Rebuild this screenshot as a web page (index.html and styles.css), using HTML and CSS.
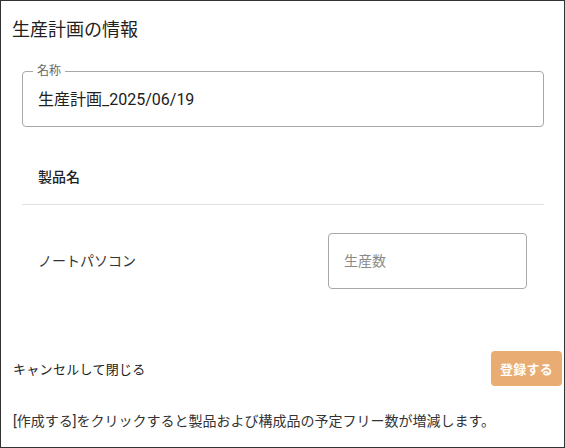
FILE: index.html
```html
<!DOCTYPE html>
<html lang="ja">
<head>
    <meta charset="UTF-8">
    <meta name="viewport" content="width=device-width, initial-scale=1.0">
    <title>生産計画の情報</title>
    <link rel="stylesheet" href="styles.css">
</head>
<body>

    <!-- ダイアログ -->
    <div class="dialog">
        <h2 class="dialog-title">生産計画の情報</h2>

        <div class="dialog-content">
            <fieldset class="name-field">
                <legend>名称</legend>
                <div class="name-value">生産計画_2025/06/19</div>
            </fieldset>

            <div class="plan-table">
                <div class="table-head">
                    <div class="cell">製品名</div>
                </div>
                <div class="table-row">
                    <div class="cell product-name">ノートパソコン</div>
                    <div class="qty-input">
                        <input type="text" placeholder="生産数">
                    </div>
                </div>
            </div>
        </div>

        <div class="dialog-actions">
            <button class="cancel-btn">キャンセルして閉じる</button>
            <button class="submit-btn" disabled>登録する</button>
        </div>

        <p class="note">[作成する]をクリックすると製品および構成品の予定フリー数が増減します。</p>
    </div>

</body>
</html>
```

FILE: styles.css
```css
body {
    margin: 0;
    font-family: Roboto, "Noto Sans CJK JP", sans-serif;
    color: #212121;
    background-color: #ffffff;
}

.dialog {
    width: 565px;
    height: 448px;
    box-sizing: border-box;
    border: 1px solid #333333;
    display: flex;
    flex-direction: column;
}

.dialog-title {
    margin: 0;
    padding: 16px 11px 0;
    font-size: 18px;
    line-height: 26px;
    font-weight: 400;
}

.dialog-content {
    padding: 0 20px 0 21px;
}

.name-field {
    margin: 21px 0 0;
    padding: 0 15px;
    height: 63px;
    box-sizing: border-box;
    border: 1px solid #a8a8a8;
    border-radius: 4px;
}

.name-field legend {
    margin-left: -5px;
    padding: 0 4px;
    font-size: 12px;
    line-height: 14px;
    color: #666666;
}

.name-value {
    font-size: 16px;
    line-height: 24px;
    margin-top: 10px;
}

.plan-table {
    margin-top: 22px;
}

.table-head {
    border-bottom: 1px solid #e0e0e0;
}

.cell {
    padding: 16px;
    font-size: 14px;
    line-height: 24px;
}

.table-head .cell {
    font-weight: 500;
    padding-bottom: 15px;
}

.table-row {
    display: flex;
    align-items: center;
    justify-content: space-between;
    padding-top: 28px;
}

.product-name {
    color: #333333;
}

.qty-input {
    padding-right: 17px;
}

.qty-input input {
    width: 199px;
    height: 56px;
    box-sizing: border-box;
    padding: 0 15px;
    border: 1px solid #a8a8a8;
    border-radius: 4px;
    font-family: Roboto, "Noto Sans CJK JP", sans-serif;
    font-size: 14px;
    outline: none;
}

.qty-input input::placeholder {
    color: #8a8a8a;
}

.dialog-actions {
    display: flex;
    align-items: center;
    justify-content: space-between;
    margin-top: 62px;
    padding: 0 2px 0 12px;
}

.cancel-btn {
    border: none;
    background: none;
    padding: 0;
    font-family: Roboto, "Noto Sans CJK JP", sans-serif;
    font-size: 13px;
    letter-spacing: 0.3px;
    color: #212121;
    cursor: pointer;
}

.submit-btn {
    width: 71px;
    height: 35px;
    border: none;
    border-radius: 4px;
    background-color: #e9ad73;
    color: #ffffff;
    font-family: Roboto, "Noto Sans CJK JP", sans-serif;
    font-size: 13px;
    font-weight: 700;
    letter-spacing: 0.3px;
}

.note {
    margin: 25px 0 0 12px;
    font-size: 14px;
    line-height: 20px;
    color: #333333;
}
```
